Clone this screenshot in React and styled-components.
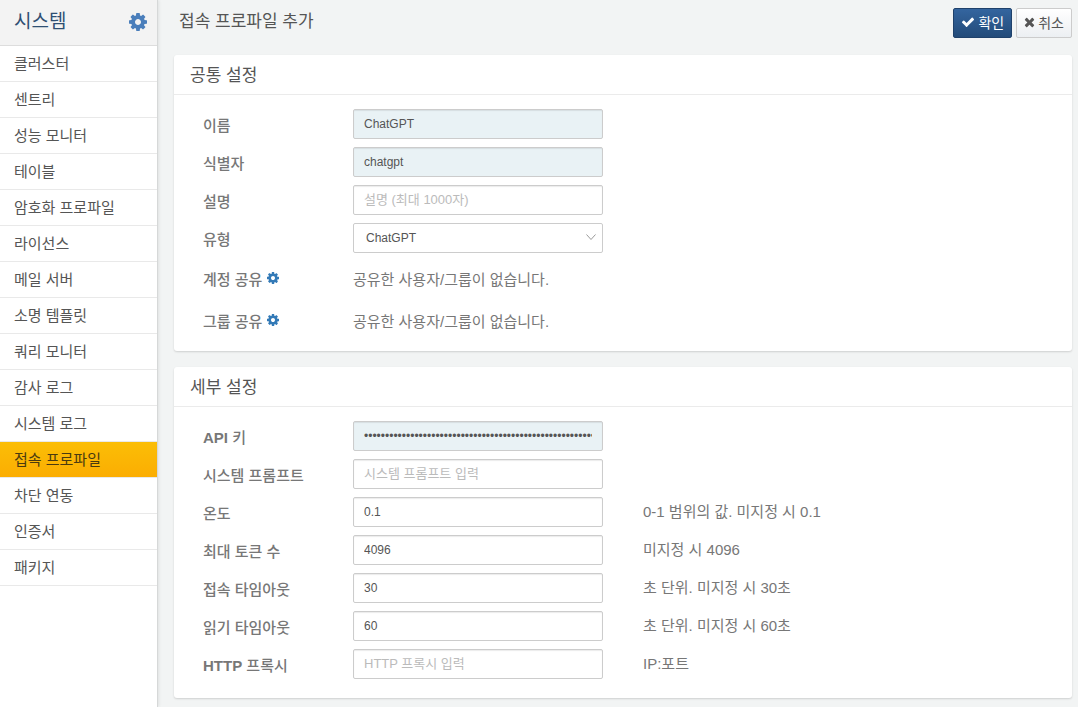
import React from 'react'
import { useState } from 'react';
import styled, { createGlobalStyle } from 'styled-components';

const GlobalStyle = createGlobalStyle`
  *{
    box-sizing: border-box;
  }

  body{
    margin: 0;
    font-family: 'Liberation Sans', 'Noto Sans CJK KR', sans-serif;
    font-size: 15px;
    color: #555555;
    background: #f2f4f4;
  }

  button, input, select{
    font-family: inherit;
  }
`;

const Page = styled.div`
  display: flex;
  min-height: 100vh;
`;

const Sidebar = styled.nav`
  flex: 0 0 158px;
  background: #ffffff;
  border-right: 1px solid #d6d8d8;
  box-shadow: 1px 0 3px rgba(0, 0, 0, 0.08);
`;

const SidebarHeader = styled.div`
  display: flex;
  align-items: center;
  justify-content: space-between;
  height: 46px;
  padding: 0 10px 2px 14px;
  background: #f3f3f3;
  border-bottom: 1px solid #dddddd;

  h1{
    margin: 0;
    font-size: 19px;
    line-height: 24px;
    font-weight: 400;
    color: #2f4f73;
  }
`;

const Menu = styled.ul`
  margin: 0;
  padding: 0;
  list-style: none;
`;

const MenuLink = styled.a`
  display: block;
  height: 36px;
  padding-left: 14px;
  line-height: 36px;
  color: ${(props) => (props.$active ? '#4a3a10' : '#555555')};
  text-decoration: none;
  border-bottom: 1px solid #e9e9e9;
  background: ${(props) => (props.$active ? 'linear-gradient(#fbbe06, #fbad02)' : '#ffffff')};
`;

const Main = styled.main`
  flex: 1;
  min-width: 0;
  padding: 0 6px 9px 16px;
`;

const TitleBar = styled.header`
  display: flex;
  justify-content: space-between;
  height: 55px;
  padding-top: 8px;

  h2{
    margin: 0 0 0 5px;
    font-size: 17px;
    line-height: 28px;
    font-weight: 400;
  }
`;

const Actions = styled.div`
  display: flex;
  gap: 4px;
`;

const ActionButton = styled.button`
  display: flex;
  align-items: center;
  gap: 3px;
  height: 30px;
  padding: 0 7px 3px;
  font-size: 14px;
  border-radius: 2px;
  white-space: nowrap;
  color: ${(props) => (props.$primary ? '#ffffff' : '#555555')};
  border: 1px solid ${(props) => (props.$primary ? '#1f416b' : '#cccccc')};
  background: ${(props) => (props.$primary ? 'linear-gradient(#34659f, #234b79)' : 'linear-gradient(#ffffff, #eceff2)')};
`;

const Card = styled.section`
  margin-bottom: 16px;
  padding-bottom: 14px;
  background: #ffffff;
  border-radius: 3px;
  box-shadow: 0 1px 2px rgba(0, 0, 0, 0.15);

  &:last-child{
    margin-bottom: 0;
    padding-bottom: 19px;
  }

  h3{
    margin: 0 0 14px;
    padding: 2px 0 0 16px;
    height: 40px;
    font-size: 17px;
    line-height: 38px;
    font-weight: 400;
    border-bottom: 1px solid #ebebeb;
  }
`;

const FieldRow = styled.div`
  display: grid;
  grid-template-columns: 150px 250px 1fr;
  margin-top: 8px;
  padding-left: 29px;
  color: #777777;

  h3 + &{
    margin-top: 0;
  }

  label{
    padding-top: 4px;
    line-height: 26px;
    font-weight: 500;
  }
`;

const Hint = styled.span`
  padding-left: 40px;
  line-height: 30px;
`;

const ShareRow = styled.div`
  display: grid;
  grid-template-columns: 150px 1fr;
  align-items: center;
  height: 34px;
  margin-top: 8px;
  padding-left: 29px;
  color: #777777;
`;

const ShareLabel = styled.div`
  display: flex;
  align-items: center;
  gap: 5px;
  font-weight: 500;
`;

const IconButton = styled.button`
  display: flex;
  padding: 0;
  border: 0;
  background: none;
  color: ${(props) => props.$color || '#337ab7'};
  cursor: pointer;
`;

const TextInput = styled.input`
  width: 100%;
  height: 30px;
  padding: 0 10px;
  font-size: 12px;
  color: #555555;
  border: 1px solid #cccccc;
  border-radius: 2px;
  background: ${(props) => (props.$filled ? '#e9f2f5' : '#ffffff')};
  box-shadow: inset 0 1px 1px rgba(0, 0, 0, 0.08);

  &:focus{
    outline: none;
  }

  &::placeholder{
    font-size: 13px;
    color: #bbbbbb;
  }
`;

const SelectBox = styled.div`
  position: relative;

  select{
    width: 100%;
    height: 30px;
    padding: 0 12px;
    font-size: 12px;
    color: #555555;
    border: 1px solid #cccccc;
    border-radius: 2px;
    background: #ffffff;
    appearance: none;
  }

  svg{
    position: absolute;
    top: 10px;
    right: 7px;
    pointer-events: none;
  }
`;

const CogIcon = ({ size }) => (
  <svg width={size} height={size} viewBox='0 128 1536 1536' fill='currentColor' aria-hidden='true'>
    <path d='M1024 896q0-106-75-181t-181-75-181 75-75 181 75 181 181 75 181-75 75-181zm512-109v222q0 12-8 23t-20 13l-185 28q-19 54-39 91 35 50 107 138 10 12 10 25t-9 23q-27 37-99 108t-94 71q-12 0-26-9l-138-108q-44 23-91 38-16 136-29 186-7 28-36 28h-222q-14 0-24.5-8.5t-11.5-21.5l-28-184q-49-16-90-37l-141 107q-10 9-25 9-14 0-25-11-126-114-165-168-7-10-7-23 0-12 8-23 15-21 51-66.5t54-70.5q-27-50-41-99l-183-27q-13-2-21-12.5t-8-23.5v-222q0-12 8-23t19-13l186-28q14-46 39-92-40-57-107-138-10-12-10-24 0-10 9-23 26-36 98.5-107.5t94.5-71.5q13 0 26 10l138 107q44-23 91-38 16-136 29-186 7-28 36-28h222q14 0 24.5 8.5t11.5 21.5l28 184q49 16 90 37l142-107q9-9 24-9 13 0 25 10 129 119 165 170 7 8 7 22 0 12-8 23-15 21-51 66.5t-54 70.5q26 50 41 98l183 28q13 2 21 12.5t8 23.5z' />
  </svg>
)

const CheckIcon = () => (
  <svg width='14' height='14' viewBox='0 0 1792 1792' fill='currentColor' aria-hidden='true'>
    <path d='M1671 566q0 40-28 68l-724 724-136 136q-28 28-68 28t-68-28l-136-136-362-362q-28-28-28-68t28-68l136-136q28-28 68-28t68 28l294 295 656-657q28-28 68-28t68 28l136 136q28 28 28 68z' />
  </svg>
)

const TimesIcon = () => (
  <svg width='11' height='14' viewBox='192 0 1408 1792' fill='currentColor' aria-hidden='true'>
    <path d='M1490 1322q0 40-28 68l-136 136q-28 28-68 28t-68-28l-294-294-294 294q-28 28-68 28t-68-28l-136-136q-28-28-28-68t28-68l294-294-294-294q-28-28-28-68t28-68l136-136q28-28 68-28t68 28l294 294 294-294q28-28 68-28t68 28l136 136q28 28 28 68t-28 68l-294 294 294 294q28 28 28 68z' />
  </svg>
)

const ChevronIcon = () => (
  <svg width='10' height='8' viewBox='0 0 10 8' fill='none' stroke='#999999' aria-hidden='true'>
    <path d='M0.5 1.5L5 6.5L9.5 1.5' />
  </svg>
)

const menus = [
  '클러스터', '센트리', '성능 모니터', '테이블', '암호화 프로파일',
  '라이선스', '메일 서버', '소명 템플릿', '쿼리 모니터', '감사 로그',
  '시스템 로그', '접속 프로파일', '차단 연동', '인증서', '패키지',
]

const commonFields = [
  { id: 'name', label: '이름', filled: true },
  { id: 'code', label: '식별자', filled: true },
  { id: 'description', label: '설명', placeholder: '설명 (최대 1000자)' },
]

const detailFields = [
  { id: 'apiKey', label: <><b>API</b> 키</>, type: 'password', filled: true },
  { id: 'prompt', label: '시스템 프롬프트', placeholder: '시스템 프롬프트 입력' },
  { id: 'temperature', label: '온도', hint: '0-1 범위의 값. 미지정 시 0.1' },
  { id: 'maxTokens', label: '최대 토큰 수', hint: '미지정 시 4096' },
  { id: 'connectTimeout', label: '접속 타임아웃', hint: '초 단위. 미지정 시 30초' },
  { id: 'readTimeout', label: '읽기 타임아웃', hint: '초 단위. 미지정 시 60초' },
  { id: 'proxy', label: <><b>HTTP</b> 프록시</>, placeholder: 'HTTP 프록시 입력', hint: 'IP:포트' },
]

const Field = ({ field, value, onChange }) => (
  <FieldRow>
    <label htmlFor={field.id}>{field.label}</label>
    <TextInput
      id={field.id}
      type={field.type || 'text'}
      placeholder={field.placeholder}
      $filled={field.filled}
      value={value}
      onChange={(e) => onChange(field.id, e.target.value)}
    />
    {field.hint ? <Hint>{field.hint}</Hint> : ''}
  </FieldRow>
)

const App = () => {
    const [active, setActive] = useState('접속 프로파일')
    const [type, setType] = useState('ChatGPT')
    const [values, setValues] = useState({
      name: 'ChatGPT',
      code: 'chatgpt',
      description: '',
      apiKey: 'x'.repeat(56),
      prompt: '',
      temperature: '0.1',
      maxTokens: '4096',
      connectTimeout: '30',
      readTimeout: '60',
      proxy: '',
    })

    const handleChange = (id, value) => {
      setValues({ ...values, [id]: value })
    }

    const handleMenuClick = (e, menu) => {
      e.preventDefault();
      setActive(menu)
    }

    return (
    <Page>
      <GlobalStyle />
      <Sidebar>
        <SidebarHeader>
          <h1>시스템</h1>
          <IconButton type='button' aria-label='시스템 설정' $color='#4a7ebb'><CogIcon size={18} /></IconButton>
        </SidebarHeader>
        <Menu>
          {menus.map((menu) => (
            <li key={menu}>
              <MenuLink href='#' $active={menu === active} onClick={(e) => handleMenuClick(e, menu)}>{menu}</MenuLink>
            </li>
          ))}
        </Menu>
      </Sidebar>
      <Main>
        <TitleBar>
          <h2>접속 프로파일 추가</h2>
          <Actions>
            <ActionButton type='button' $primary><CheckIcon />확인</ActionButton>
            <ActionButton type='button'><TimesIcon />취소</ActionButton>
          </Actions>
        </TitleBar>
        <Card>
          <h3>공통 설정</h3>
          {commonFields.map((field) => (
            <Field key={field.id} field={field} value={values[field.id]} onChange={handleChange} />
          ))}
          <FieldRow>
            <label htmlFor='type'>유형</label>
            <SelectBox>
              <select id='type' value={type} onChange={(e) => setType(e.target.value)}>
                <option>ChatGPT</option>
              </select>
              <ChevronIcon />
            </SelectBox>
          </FieldRow>
          {['계정 공유', '그룹 공유'].map((label) => (
            <ShareRow key={label}>
              <ShareLabel>
                {label}
                <IconButton type='button' aria-label={label + ' 설정'}><CogIcon size={12} /></IconButton>
              </ShareLabel>
              <span>공유한 사용자/그룹이 없습니다.</span>
            </ShareRow>
          ))}
        </Card>
        <Card>
          <h3>세부 설정</h3>
          {detailFields.map((field) => (
            <Field key={field.id} field={field} value={values[field.id]} onChange={handleChange} />
          ))}
        </Card>
      </Main>
    </Page>
  )
}

export default App
